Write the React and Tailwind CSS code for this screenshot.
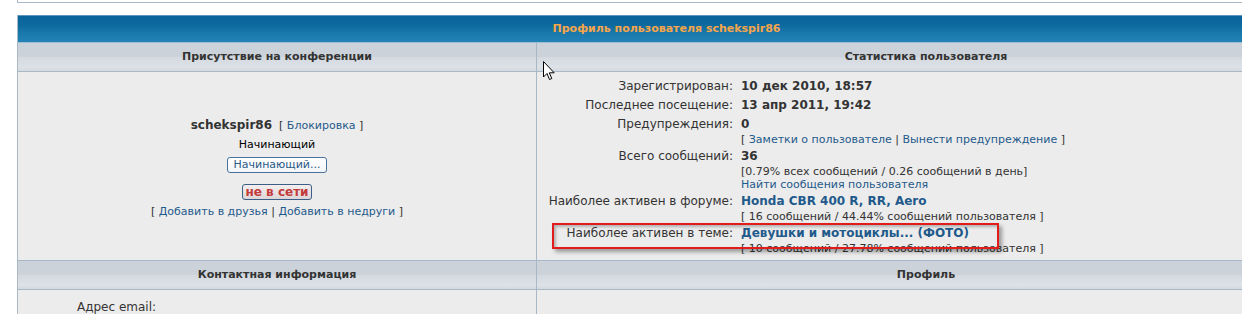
import React from 'react';

const HeadCell = ({ children, className = '' }) => (
  <div className={`h-[29px] flex items-center justify-center text-[11px] font-bold text-[#333] border-b border-[#a9b8c6] bg-[linear-gradient(to_bottom,#cbd2d9_0%,#cbd2d9_48%,#d4dae0_52%,#d9dee4_72%,#dde2e7_86%,#d3d9df_100%)] ${className}`}>
    {children}
  </div>
);

const Link = ({ children, bold }) => (
  <a className={`text-[#1f5a8b] ${bold ? 'font-bold text-[#1a6496]' : ''}`}>{children}</a>
);

const stats = [
  { label: 'Зарегистрирован:', value: <b>10 дек 2010, 18:57</b> },
  { label: 'Последнее посещение:', value: <b>13 апр 2011, 19:42</b> },
  {
    label: 'Предупреждения:',
    value: <b>0</b>,
    extra: [
      <span>[ <Link>Заметки о пользователе</Link> | <Link>Вынести предупреждение</Link> ]</span>,
    ],
  },
  {
    label: 'Всего сообщений:',
    value: <b>36</b>,
    extra: [
      <span>[0.79% всех сообщений / 0.26 сообщений в день]</span>,
      <Link>Найти сообщения пользователя</Link>,
    ],
  },
  {
    label: 'Наиболее активен в форуме:',
    value: <Link bold>Honda CBR 400 R, RR, Aero</Link>,
    extra: [<span>[ 16 сообщений / 44.44% сообщений пользователя ]</span>],
  },
  {
    label: 'Наиболее активен в теме:',
    value: <Link bold>Девушки и мотоциклы... (ФОТО)</Link>,
    extra: [<span>[ 10 сообщений / 27.78% сообщений пользователя ]</span>],
  },
];

const App = () => {
  return (
    <div className="relative w-[1242px] h-[314px] overflow-hidden bg-white text-[#333] font-['DejaVu_Sans',Verdana,sans-serif]">
      {/* хвост предыдущего блока */}
      <div className="ml-[17px] h-[3px] w-[1300px] border-l border-b border-[#a9b8c6]" />

      <div className="ml-[17px] mt-[12px] w-[1298px] border-l border-[#a9b8c6] bg-[#ececec]">
        <div className="h-[28px] flex items-center justify-center border-t border-[#5d95bd] border-b border-b-[#9fbdd3] bg-[linear-gradient(to_bottom,#08639a_0%,#0d6a9f_35%,#1a78ab_65%,#2283b6_100%)] text-[11px] font-bold text-[#f5a54a]">
          Профиль пользователя schekspir86
        </div>

        <div className="grid grid-cols-[519px_1fr]">
          <HeadCell className="border-r border-r-[#a9b8c6]">Присутствие на конференции</HeadCell>
          <HeadCell>Статистика пользователя</HeadCell>

          {/* левая ячейка */}
          <div className="h-[189px] border-r border-b border-[#a9b8c6] flex flex-col items-center justify-center pt-[5px]">
            <div className="flex items-baseline gap-[7px]">
              <span className="text-[12px] font-bold text-[#333]">schekspir86</span>
              <span className="text-[11px] text-[#333]">[ <Link>Блокировка</Link> ]</span>
            </div>
            <div className="mt-[2px] text-[11px] text-black">Начинающий</div>
            <div className="mt-[4px] w-[100px] h-[16px] rounded-[3px] border border-[#47739d] bg-[linear-gradient(to_bottom,#ffffff,#f2f4f7)] flex items-center justify-center text-[11px] text-[#2c5a85]">
              Начинающий...
            </div>
            <div className="mt-[11px] w-[70px] h-[16px] rounded-[3px] border border-[#3b5f86] bg-[linear-gradient(to_bottom,#f4eeee,#dcd6d8)] flex items-center justify-center text-[12px] font-bold text-[#c33a3a]">
              не в сети
            </div>
            <div className="mt-[4px] text-[11px] text-[#333]">
              [ <Link>Добавить в друзья</Link> | <Link>Добавить в недруги</Link> ]
            </div>
          </div>

          {/* правая ячейка */}
          <div className="h-[189px] border-b border-[#a9b8c6] pt-[6px]">
            <div className="grid grid-cols-[196px_1fr] gap-x-2 gap-y-[2px]">
              {stats.map((s) => (
                <React.Fragment key={s.label}>
                  <div className="text-right text-[12px] leading-[17px] text-[#333]">{s.label}</div>
                  <div>
                    <div className="text-[12px] leading-[17px] text-[#333]">{s.value}</div>
                    {(s.extra || []).map((e, i) => (
                      <div key={i} className="text-[11px] leading-[13px] text-[#333]">{e}</div>
                    ))}
                  </div>
                </React.Fragment>
              ))}
            </div>
          </div>

          <HeadCell className="border-r border-r-[#a9b8c6]">Контактная информация</HeadCell>
          <HeadCell>Профиль</HeadCell>

          <div className="h-[40px] border-r border-[#a9b8c6] pl-[59px] pt-[8px] text-[12px] text-[#333]">Адрес email:</div>
          <div className="h-[40px]" />
        </div>
      </div>

      {/* выделение */}
      <div className="absolute left-[552px] top-[223px] w-[447px] h-[26px] border-2 border-[#e21b1b] shadow-[3px_3px_4px_rgba(0,0,0,0.35),inset_2px_2px_3px_rgba(0,0,0,0.25)]" />

      {/* курсор */}
      <svg className="absolute left-[543px] top-[61px]" width="13" height="20" viewBox="0 0 13 20">
        <path d="M0.5 0.5 L0.5 16 L4 12.5 L6.5 18.5 L8.8 17.5 L6.3 11.8 L11.2 11.8 Z" fill="#fff" stroke="#000" strokeWidth="1" strokeLinejoin="miter" />
      </svg>
    </div>
  );
};

export default App;
